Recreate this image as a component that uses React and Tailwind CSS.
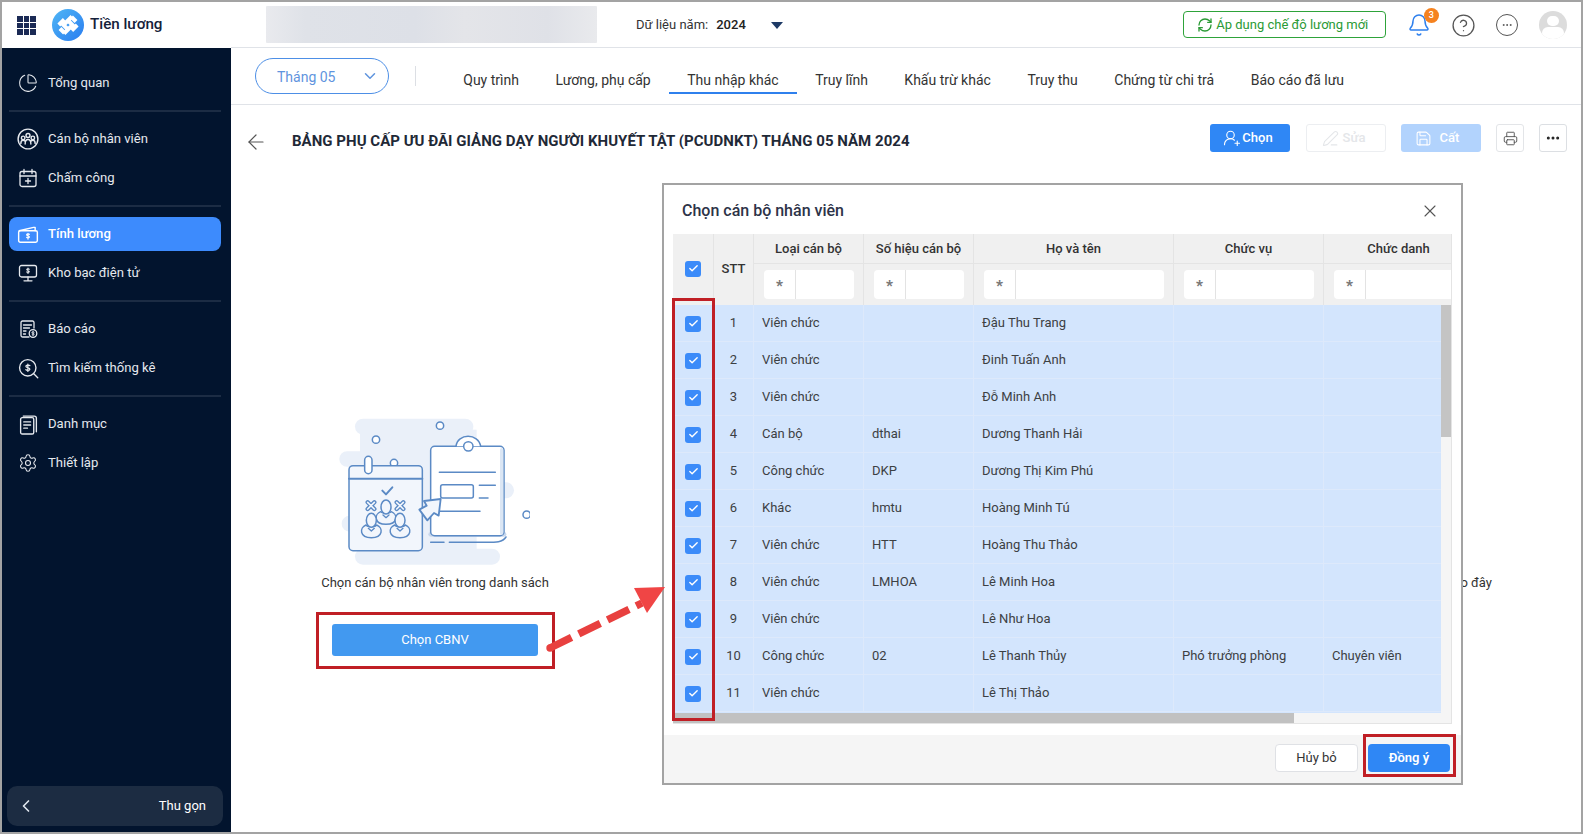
import React from "react";
import { ChevronDown, ChevronLeft, X, ArrowLeft, RefreshCw, Bell, Printer, PenLine, Save, UserRoundPlus, Ellipsis, CircleHelp, ChartPie, Settings, Check } from "lucide-react";

const Ic = ({ children, size = 20, className = "" }) => (
  <svg width={size} height={size} viewBox="0 0 20 20" fill="none" stroke="currentColor" strokeWidth="1.3" strokeLinecap="round" strokeLinejoin="round" className={className}>{children}</svg>
);

const PeopleIcon = () => (
  <Ic size={22}>
    <circle cx="10" cy="10" r="9" />
    <circle cx="10" cy="6.8" r="1.8" /><circle cx="5.6" cy="9" r="1.6" /><circle cx="14.4" cy="9" r="1.6" />
    <path d="M7.4 14.5c0-2.6 1-4 2.6-4s2.6 1.4 2.6 4M3.5 14c0-1.6.8-2.8 2.1-2.8.6 0 1 .2 1.4.5M16.5 14c0-1.6-.8-2.8-2.1-2.8-.6 0-1 .2-1.4.5" />
  </Ic>
);
const CalendarIcon = () => (
  <Ic size={20}>
    <rect x="2" y="3.500" width="16" height="15" rx="2" />
    <path d="M2 8h16M6 1.500v4M14 1.500v4M10 10.500v5M7.500 13h5" />
  </Ic>
);
const WalletIcon = () => (
  <Ic size={22}>
    <path d="M2 7l13-3 1.500 0v3" />
    <rect x="1.500" y="7" width="17" height="10.500" rx="1.500" />
    <path d="M11.300 10.300c-.4-.6-2.600-.7-2.600.4 0 1.200 2.600.7 2.600 2 0 1.100-2.200 1-2.600.3M10 9.300v5.400" strokeWidth="1" />
  </Ic>
);
const MonitorIcon = () => (
  <Ic size={20}>
    <rect x="1.500" y="2.500" width="17" height="11.500" rx="2" />
    <path d="M10 14v3.500M6 17.800h8" />
    <path d="M11.300 6.200c-.4-.6-2.600-.7-2.600.4 0 1.200 2.600.7 2.600 2 0 1.100-2.200 1-2.600.3M10 5v5.400" strokeWidth="1.100" />
  </Ic>
);
const ReportIcon = () => (
  <Ic size={20}>
    <path d="M16 9V3.500A1.500 1.500 0 0 0 14.500 2h-10A1.500 1.500 0 0 0 3 3.500v13A1.500 1.500 0 0 0 4.500 18H11" />
    <path d="M5.500 6h8M5.500 9h6M5.500 12h2.500M5.500 15h2" />
    <circle cx="15" cy="14.500" r="3.800" />
    <path d="M16.200 13.200c-.3-.5-2.300-.5-2.300.4 0 1 2.300.6 2.300 1.700 0 .9-2 .8-2.300.2M15 12.300v4.500" strokeWidth="0.9" />
  </Ic>
);
const SearchDollar = () => (
  <Ic size={21}>
    <circle cx="9.300" cy="9.300" r="7.800" />
    <path d="M15 15l3.800 3.800" />
    <path d="M11.300 7.300c-.5-.8-3.800-.9-3.800.6 0 1.700 3.800 1 3.800 2.800 0 1.500-3.200 1.400-3.800.4M9.400 5.800v7" strokeWidth="1.200" />
  </Ic>
);
const DocsIcon = () => (
  <Ic size={21}>
    <rect x="2.500" y="3.500" width="12.500" height="15.500" rx="1.500" />
    <path d="M5 2h10.500A2 2 0 0 1 17.500 4v13" />
    <path d="M5.500 7.500h6.500M5.500 10.500h6.500M5.500 13.500h3.500" />
  </Ic>
);

const Logo = () => (
  <svg width="32" height="32" viewBox="0 0 32 32">
    <defs>
      <linearGradient id="lg" x1="0" y1="0" x2="1" y2="1">
        <stop offset="0" stopColor="#4fb6f5" /><stop offset="1" stopColor="#2a7df0" />
      </linearGradient>
    </defs>
    <circle cx="16" cy="16" r="16" fill="url(#lg)" />
    <g fill="none" stroke="#fff" strokeWidth="4" strokeLinejoin="miter">
      <path d="M20 7.500L11.500 16l4.500 4.500" />
      <path d="M12 24.500L20.500 16 16 11.500" />
      <path d="M6.800 16l5.500-5.500M25.200 16l-5.500 5.500" />
      <path d="M19.500 8l4.500 4.500M12.500 24L8 19.500" />
    </g>
  </svg>
);

const AppsGrid = () => (
  <div className="grid grid-cols-3 gap-[1px] w-[19px] h-[19px] mt-[1px]">
    {Array.from({ length: 9 }).map((_, i) => <span key={i} className="bg-[#1b2a55]" />)}
  </div>
);

const NavItem = ({ icon, label, active }) => (
  <div className="h-[39px] flex items-center">
    <div className={`flex items-center w-full h-[34px] rounded-[8px] pl-[8px] ${active ? "bg-[#3d8bfd] text-white font-medium" : "text-[#e6e9ee]"}`}>
      <span className="w-[22px] flex justify-center items-center">{icon}</span>
      <span className="ml-[9px] text-[13.100px] leading-none">{label}</span>
    </div>
  </div>
);
const Sep = () => <div className="h-[2px] my-[7.500px] bg-[#1c2c44]" />;

const Sidebar = () => (
  <aside className="w-[229px] shrink-0 bg-[#02142e] flex flex-col pt-[15.500px] pb-[6px] pl-[7px] pr-[10px]">
    <div className="flex-1">
      <NavItem icon={<ChartPie size={20} strokeWidth={1.300} />} label="Tổng quan" />
      <Sep />
      <NavItem icon={<PeopleIcon />} label="Cán bộ nhân viên" />
      <NavItem icon={<CalendarIcon />} label="Chấm công" />
      <Sep />
      <NavItem icon={<WalletIcon />} label="Tính lương" active />
      <NavItem icon={<MonitorIcon />} label="Kho bạc điện tử" />
      <Sep />
      <NavItem icon={<ReportIcon />} label="Báo cáo" />
      <NavItem icon={<SearchDollar />} label="Tìm kiếm thống kê" />
      <Sep />
      <NavItem icon={<DocsIcon />} label="Danh mục" />
      <NavItem icon={<Settings size={20} strokeWidth={1.300} />} label="Thiết lập" />
    </div>
    <div className="h-[40px] -mr-[2px] -ml-[2px] rounded-[10px] bg-[#1c2c42] flex items-center justify-between pl-[9px] pr-[17px] text-white">
      <ChevronLeft size={20} strokeWidth={2} className="text-[#dfe6ee]" />
      <span className="text-[13px]">Thu gọn</span>
    </div>
  </aside>
);

const Header = () => (
  <header className="h-[46px] shrink-0 flex items-center bg-white">
    <div className="ml-[15px]"><AppsGrid /></div>
    <div className="ml-[16px]"><Logo /></div>
    <span className="ml-[6px] -mt-[2px] text-[15.200px] font-medium text-[#15213a] w-[176px]">Tiền lương</span>
    <div className="h-[37px] w-[331px] rounded-[1px] -mt-[1px] bg-[linear-gradient(90deg,#e9eaee_0%,#dfe2e8_12%,#dde0e7_45%,#e4e5e9_60%,#dfe1e7_85%,#e9eaed_100%)]" />
    <span className="ml-[39px] text-[13px] text-[#333]">Dữ liệu năm:</span>
    <span className="ml-[8px] text-[13px] font-medium text-[#222]">2024</span>
    <span className="ml-[25px] w-0 h-0 border-x-[6px] border-x-transparent border-t-[7px] border-t-[#1e3a66]" />
    <button className="ml-[400px] h-[27px] w-[203px] rounded-[4px] border border-[#2ea33a] flex items-center justify-center gap-[3px] pr-[3px] text-[13px] text-[#2a9a35] -mt-[1px]">
      <RefreshCw size={16} strokeWidth={2} />Áp dụng chế độ lương mới
    </button>
    <div className="relative ml-[21px] text-[#2f80ed]">
      <Bell size={24} strokeWidth={1.500} />
      <span className="absolute -top-[5px] left-[17px] w-[15px] h-[15px] rounded-full bg-[#f5821f] text-white text-[9px] font-medium flex items-center justify-center">3</span>
    </div>
    <CircleHelp size={25} strokeWidth={1.250} className="ml-[20px] text-[#555]" />
    <div className="ml-[20px] w-[22px] h-[22px] rounded-full border-[1.300px] border-[#555] flex items-center justify-center text-[#555]"><Ellipsis size={12} strokeWidth={2} /></div>
    <div className="ml-[21px] w-[28px] h-[28px] rounded-full bg-[#dcdcdc] overflow-hidden flex flex-col items-center">
      <span className="w-[12px] h-[12px] rounded-full bg-white mt-[5px]" />
      <span className="w-[22px] h-[14px] rounded-full bg-white mt-[1px]" />
    </div>
  </header>
);

const tabs = ["Quy trình", "Lương, phụ cấp", "Thu nhập khác", "Truy lĩnh", "Khấu trừ khác", "Truy thu", "Chứng từ chi trả", "Báo cáo đã lưu"];
const Tabs = () => (
  <div className="h-[56px] shrink-0 flex items-center border-t border-b border-[#e0e3e8] box-content -mt-[1px]">
    <div className="ml-[24px] w-[134px] h-[36px] rounded-full border border-[#4d8fe6] flex items-center justify-between pl-[21px] pr-[9px] text-[#5f94de] text-[14px]">
      <span className="pt-[2px]">Tháng 05</span><ChevronDown size={18} strokeWidth={2} />
    </div>
    <div className="ml-[26px] w-px h-[20px] bg-[#dcdfe4]" />
    <div className="ml-[29px] flex h-[36px]">
      {tabs.map((t, i) => (
        <div key={t} className={`px-[18.250px] pt-[10px] flex items-center text-[14px] text-[#333] border-b-2 ${i === 2 ? "border-[#2f80ed]" : "border-transparent"}`}>{t}</div>
      ))}
    </div>
  </div>
);

const TitleRow = () => (
  <div className="h-[73px] shrink-0 flex items-center">
    <ArrowLeft size={24} strokeWidth={1.200} className="ml-[13px] text-[#555]" />
    <h1 className="ml-[24px] text-[15px] tracking-[0.03px] font-bold text-[#1f2937] whitespace-nowrap w-[918px]">BẢNG PHỤ CẤP ƯU ĐÃI GIẢNG DẠY NGƯỜI KHUYẾT TẬT (PCUDNKT) THÁNG 05 NĂM 2024</h1>
    <div className="self-start mt-[19px] flex items-center gap-[16px]">
      <button className="w-[80px] h-[28px] rounded-[3px] bg-[#2f87f5] text-white text-[13px] font-medium flex items-center justify-center gap-[1px] pr-[4px]"><UserRoundPlus size={18} strokeWidth={1.500} />Chọn</button>
      <button className="w-[80px] h-[28px] rounded-[3px] border border-[#eceef1] text-[#e4e6e9] text-[13px] font-medium flex items-center justify-center gap-[4px] pr-[5px]"><PenLine size={17} strokeWidth={1.500} />Sửa</button>
      <button className="-ml-[1px] w-[80px] h-[28px] rounded-[3px] bg-[#b2d3fd] text-white text-[13px] font-medium flex items-center justify-center gap-[8px] pr-[8px]"><Save size={17} strokeWidth={1.500} />Cất</button>
      <button className="-ml-[1px] w-[28px] h-[28px] rounded-[3px] border border-[#e3e5e8] flex items-center justify-center text-[#555]"><Printer size={15} strokeWidth={1.500} /></button>
      <button className="-ml-[1px] w-[28px] h-[28px] rounded-[3px] border border-[#dcdfe3] flex items-center justify-center text-[#222]"><Ellipsis size={16} strokeWidth={2.500} /></button>
    </div>
  </div>
);

const Person = ({ x, y }) => (
  <g transform={`translate(${x} ${y})`}>
    <path d="M-16 14c-20 8-20 38 16 38s36-30 16-38c-4 6-28 6-32 0z" fill="#f2f6fc" />
    <path d="M-9 24l9 8 9-8" strokeWidth="4" />
    <ellipse cx="0" cy="0" rx="15" ry="21" fill="#f2f6fc" />
  </g>
);
const Cross = ({ x, y }) => (
  <g transform={`translate(${x} ${y})`} strokeLinecap="round">
    <path d="M-10 -10L10 10M10 -10L-10 10" strokeWidth="13" />
    <path d="M-10 -10L10 10M10 -10L-10 10" strokeWidth="5" stroke="#f2f6fc" />
  </g>
);

const Illustration = () => (
  <svg width="200" height="155" viewBox="60 40 600 465" fill="none" stroke="#5b8ac5" strokeWidth="4.500" strokeLinecap="round" strokeLinejoin="round" className="-ml-[10px]">
    <g fill="#eaf0f9" stroke="none">
      <rect x="135" y="57" width="355" height="48" rx="24" />
      <rect x="88" y="155" width="300" height="46" rx="23" />
      <rect x="150" y="90" width="350" height="360" />
      <rect x="400" y="248" width="212" height="48" rx="24" />
      <rect x="95" y="348" width="200" height="48" rx="24" />
      <rect x="135" y="447" width="435" height="48" rx="24" />
    </g>
    <circle cx="390" cy="78" r="11" fill="#fff" />
    <circle cx="198" cy="120" r="11" fill="#fff" />
    <circle cx="650" cy="345" r="11" fill="#fff" />
    <circle cx="252" cy="190" r="11" fill="#fff" />
    <rect x="117" y="198" width="220" height="255" rx="12" fill="#f2f6fc" />
    <path d="M117 237h220" strokeWidth="6" />
    <rect x="164" y="170" width="22" height="52" rx="11" fill="#fff" />
    <path d="M217 273l11 11 19-21" strokeWidth="6" />
    <Cross x={183} y={318} />
    <Cross x={270} y={318} />
    <Person x={228} y={322} />
    <Person x={184} y={362} />
    <Person x={270} y={362} />
    <path d="M362 404h220" stroke="#c8d7ec" strokeWidth="14" />
    <rect x="362" y="140" width="220" height="268" rx="12" fill="#fff" />
    <path d="M575 150v250" stroke="#dbe6f4" strokeWidth="10" />
    <path d="M438 140c4-40 68-40 74 0" fill="#fff" />
    <circle cx="475" cy="140" r="14" fill="#fff" />
    <path d="M388 218h168M508 257h48M508 295h26M390 335h120" />
    <rect x="392" y="255" width="98" height="40" rx="6" fill="#fff" />
    <path d="M328 330l22-12-8-14 50-6-6 50-14-8-20 22z" fill="#f2f6fc" strokeWidth="5.500" />
    <path d="M362 428h40M418 428h110c30 0 50 0 60-16" />
  </svg>
);

const rows = [
  ["1", "Viên chức", "", "Đậu Thu Trang"],
  ["2", "Viên chức", "", "Đinh Tuấn Anh"],
  ["3", "Viên chức", "", "Đỗ Minh Anh"],
  ["4", "Cán bộ", "dthai", "Dương Thanh Hải"],
  ["5", "Công chức", "DKP", "Dương Thị Kim Phú"],
  ["6", "Khác", "hmtu", "Hoàng Minh Tú"],
  ["7", "Viên chức", "HTT", "Hoàng Thu Thảo"],
  ["8", "Viên chức", "LMHOA", "Lê Minh Hoa"],
  ["9", "Viên chức", "", "Lê Như Hoa"],
  ["10", "Công chức", "02", "Lê Thanh Thủy", "Phó trưởng phòng", "Chuyên viên"],
  ["11", "Viên chức", "", "Lê Thị Thảo"],
];

const Box = () => (
  <span className="w-[16px] h-[16px] rounded-[3px] bg-[#3b8bf9] flex items-center justify-center"><Check size={11} strokeWidth={3} className="text-white" /></span>
);
const COLS = "grid grid-cols-[41px_40px_110px_110px_200px_150px_150px] w-[801px]";

const Filter = ({ w }) => (
  <div className={`h-[29px] bg-white rounded-[4px] flex ${w}`}>
    <span className="w-[32px] border-r border-[#e3e3e3] flex items-center justify-center text-[#777] text-[15px] font-black leading-none pt-[4px]">*</span>
  </div>
);

const TableHead = () => (
  <div className={`${COLS} h-[71px] bg-[#f0f0f0] text-[13px] font-medium text-[#333] shrink-0 grid-rows-[30px_41px]`}>
    <div className="row-span-2 flex items-center justify-center pb-[2px] border-r border-[#e4e4e4]"><Box /></div>
    <div className="row-span-2 flex items-center justify-center pb-[2px] border-r border-[#e4e4e4]">STT</div>
    {["Loại cán bộ", "Số hiệu cán bộ", "Họ và tên", "Chức vụ", "Chức danh"].map((h) => (
      <div key={h} className="flex items-center justify-center border-r border-b border-[#e4e4e4]">{h}</div>
    ))}
    {["w-[90px]", "w-[90px]", "w-[180px]", "w-[130px]", "w-[130px]"].map((w, i) => (
      <div key={i} className="pl-[10px] pt-[6px] border-r border-[#e4e4e4]"><Filter w={w} /></div>
    ))}
  </div>
);

const Modal = () => (
  <div className="absolute left-[660px] top-[181px] w-[801px] h-[602px] bg-white border-2 border-[#a3a3a3] flex flex-col">
    <div className="h-[49px] shrink-0 flex items-center justify-between pl-[18px] pr-[21px] pt-[2px]">
      <h2 className="text-[16px] font-medium text-[#2d3348]">Chọn cán bộ nhân viên</h2>
      <X size={20} strokeWidth={1.300} className="text-[#555]" />
    </div>
    <div className="ml-[9px] mr-[9px] h-[490px] flex flex-col border-r border-b border-[#e4e4e4] overflow-hidden shrink-0">
      <TableHead />
      <div className="flex-1 flex min-h-0">
        <div className="flex-1 overflow-hidden bg-[#d3e5fd]">
          {rows.map((r) => (
            <div key={r[0]} className={`${COLS} h-[37px] border-b border-[#dde9fb] text-[13px] text-[#3c4043]`}>
              <div className="flex items-center justify-center pt-[1px] border-r border-[#dde9fb]"><Box /></div>
              <div className="flex items-center justify-center border-r border-[#dde9fb]">{r[0]}</div>
              <div className="flex items-center pl-[8px] border-r border-[#dde9fb]">{r[1]}</div>
              <div className="flex items-center pl-[8px] border-r border-[#dde9fb]">{r[2]}</div>
              <div className="flex items-center pl-[8px] border-r border-[#dde9fb]">{r[3]}</div>
              <div className="flex items-center pl-[8px] border-r border-[#dde9fb]">{r[4]}</div>
              <div className="flex items-center pl-[8px]">{r[5]}</div>
            </div>
          ))}
        </div>
        <div className="w-[10px] bg-[#f5f5f5]"><div className="h-[132px] bg-[#c4c4c4]" /></div>
      </div>
      <div className="h-[10px] shrink-0 bg-[#f5f5f5]"><div className="w-[621px] h-full bg-[#c1c1c1]" /></div>
    </div>
    <div className="mt-[11px] flex-1 bg-[#f5f5f5] flex items-center justify-end gap-[10px] pr-[11px] pb-[3px]">
      <button className="w-[83px] h-[28px] rounded-[4px] bg-white border border-[#dfe1e5] text-[13px] text-[#333]">Hủy bỏ</button>
      <button className="w-[82px] h-[28px] rounded-[4px] bg-[#2f87f5] text-white text-[13px] font-semibold">Đồng ý</button>
    </div>
  </div>
);

const Annotations = () => (
  <>
    <div className="absolute left-[314px] top-[610px] w-[239px] h-[57px] border-[3px] border-[#c01f25]" />
    <div className="absolute left-[670px] top-[296px] w-[43px] h-[423px] border-[3px] border-[#c01f25]" />
    <div className="absolute left-[1361px] top-[732px] w-[93px] h-[43px] border-[3px] border-[#c01f25]" />
    <svg className="absolute left-[538px] top-[578px]" width="130" height="80" viewBox="538 578 130 80" fill="none">
      <path d="M548 646L640 601" stroke="#e8403f" strokeWidth="7.500" strokeDasharray="24 8" strokeLinecap="butt" />
      <circle cx="548" cy="646" r="3.700" fill="#e8403f" />
      <path d="M663 585L632 586L645 611Z" fill="#f04545" />
    </svg>
  </>
);

export default function App() {
  return (
    <div className="relative w-[1583px] h-[834px] border-2 border-[#a3a3a3] bg-white overflow-hidden flex flex-col font-['Roboto',sans-serif]">
      <Header />
      <div className="flex-1 flex min-h-0">
        <Sidebar />
        <main className="flex-1 flex flex-col min-w-0">
          <Tabs />
          <TitleRow />
          <div className="flex-1 flex justify-between">
            <div className="ml-[74px] w-[260px] pt-[235px] flex flex-col items-center">
              <Illustration />
              <p className="mt-[5px] text-[13px] text-[#333] whitespace-nowrap">Chọn cán bộ nhân viên trong danh sách</p>
              <button className="mt-[31px] w-[206px] h-[32px] rounded-[3px] bg-[#4299f0] text-white text-[13px]">Chọn CBNV</button>
            </div>
            <p className="pt-[395px] pr-[89px] text-[13px] text-[#333]">Chọn để nhập vào đây</p>
          </div>
        </main>
      </div>
      <Modal />
      <Annotations />
    </div>
  );
}
